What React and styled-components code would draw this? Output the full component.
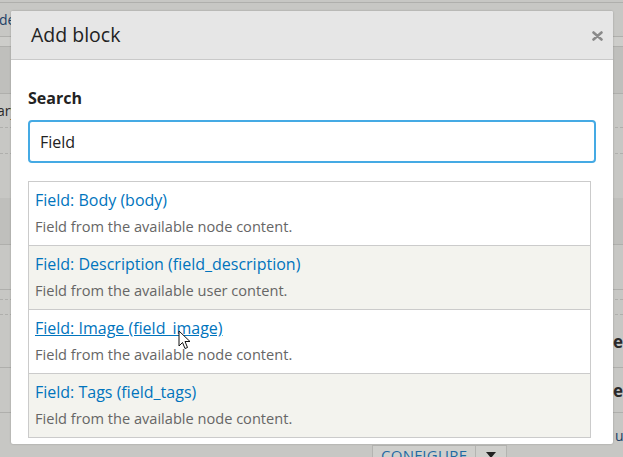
// REACT IMPORTS
import React from 'react';

// STYLING
import styled, { createGlobalStyle } from 'styled-components';

const GlobalStyle = createGlobalStyle`
  html, body {
    margin: 0;
    padding: 0;
    width: 623px;
    height: 457px;
    overflow: hidden;
    font-family: "Open Sans", "Noto Sans", sans-serif;
  }
`;

// BACKDROP (the dimmed page behind the dialog)
const Page = styled.div`
  position: relative;
  width: 623px;
  height: 457px;
  overflow: hidden;
  background: #c7c7c4;
  display: flex;
  flex-direction: column;
`;
const Stripe = styled.div`
  flex: 0 0 ${p => p.$h}px;
  box-sizing: border-box;
  background: ${p => p.$bg || 'transparent'};
  border-bottom: ${p => (p.$line ? `1px ${p.$line} #afafac` : 'none')};
  display: flex;
  align-items: ${p => p.$align || 'center'};
  padding-left: ${p => p.$indent || 0}px;
  white-space: nowrap;
  overflow: hidden;
`;
const BackText = styled.span`
  font-size: ${p => (p.$bold ? 17 : 14)}px;
  font-weight: ${p => (p.$bold ? 700 : 400)};
  color: ${p => p.$color || '#2a2a2a'};
  margin-left: ${p => p.$shift || 0}px;
`;
const SplitButton = styled.div`
  display: flex;
  align-self: flex-start;
  height: 20px;
  border: 1px solid #b4b4b1;
  background: #cfcfcc;
`;
const ButtonLabel = styled.span`
  padding: 0 8px;
  font-size: 15px;
  line-height: 18px;
  color: #1f6aa3;
  letter-spacing: 0.3px;
  border-right: 1px solid #b4b4b1;
`;
const Caret = styled.span`
  width: 30px;
  display: flex;
  justify-content: center;
  padding-top: 6px;
  &::after {
    content: '';
    border-left: 5px solid transparent;
    border-right: 5px solid transparent;
    border-top: 6px solid #222;
    height: 0;
  }
`;

// DIALOG
const Dialog = styled.div`
  position: absolute;
  left: 11px;
  top: 11px;
  width: 602px;
  height: 433px;
  background: #fff;
  border-radius: 2px;
  box-shadow: 0 0 2px rgba(0, 0, 0, 0.25);
  display: flex;
  flex-direction: column;
  overflow: hidden;
`;
const Header = styled.div`
  flex: 0 0 49px;
  box-sizing: border-box;
  background: #e6e6e6;
  border-bottom: 1px solid #c9c9c9;
  display: flex;
  align-items: center;
  justify-content: space-between;
  padding: 0 10px 0 20px;
`;
const Title = styled.h1`
  margin: 0 0 1px;
  font-size: 19.5px;
  font-weight: 400;
  color: #222;
`;
const CloseButton = styled.button`
  border: 0;
  background: none;
  padding: 0;
  display: flex;
  margin-top: 2px;
`;
const Body = styled.div`
  flex: 1;
  padding: 28px 17px 0;
  display: flex;
  flex-direction: column;
`;
const Label = styled.label`
  font-size: 16px;
  line-height: 20px;
  font-weight: 700;
  color: #222;
  margin-bottom: 12px;
`;
const SearchInput = styled.div`
  height: 43px;
  box-sizing: border-box;
  border: 2px solid #45aae4;
  border-radius: 4px;
  display: flex;
  align-items: center;
  padding: 0 10px;
  font-size: 16px;
  color: #222;
  margin-bottom: 18px;
`;
const List = styled.ul`
  list-style: none;
  margin: 0;
  padding: 0;
  width: 563px;
  box-sizing: border-box;
  border: 1px solid #cbcbcb;
`;
const Row = styled.li`
  position: relative;
  box-sizing: border-box;
  padding: 7px 6px 0;
  background: ${p => (p.$alt ? '#f3f3ee' : '#fff')};
  border-top: ${p => (p.$first ? 'none' : '1px solid #cbcbcb')};
  height: ${p => (p.$first ? 63 : 64)}px;
`;
const BlockLink = styled.a`
  display: inline-block;
  font-size: 16px;
  line-height: 22px;
  color: #0074bd;
  text-decoration: ${p => (p.$hover ? 'underline' : 'none')};
`;
const Description = styled.div`
  margin-top: 5px;
  font-size: 14.6px;
  line-height: 20px;
  color: #666;
`;
const Pointer = styled.svg`
  position: absolute;
  left: 149px;
  top: 20px;
`;

const blocks = [
  { label: 'Field: Body (body)', desc: 'Field from the available node content.' },
  { label: 'Field: Description (field_description)', desc: 'Field from the available user content.' },
  { label: 'Field: Image (field_image)', desc: 'Field from the available node content.', hover: true },
  { label: 'Field: Tags (field_tags)', desc: 'Field from the available node content.' }
];

function App() {
  return (
    <Page>
      <GlobalStyle />
      <Stripe $h={3} $line='solid' />
      <Stripe $h={34} $line='solid'><BackText $color='#1c3f66' $shift={-1}>de</BackText></Stripe>
      <Stripe $h={10} $bg='#cdcdca' $line='solid' />
      <Stripe $h={47} $bg='#bfbfbc' $line='solid' />
      <Stripe $h={34} $line='dashed'><BackText $shift={-3}>ary</BackText></Stripe>
      <Stripe $h={26} $line='dashed' />
      <Stripe $h={44} />
      <Stripe $h={47} $bg='#bfbfbc' $line='solid' />
      <Stripe $h={45} $line='solid' />
      <Stripe $h={10} $line='dashed' />
      <Stripe $h={15} $line='dashed' />
      <Stripe $h={53} $indent={613} $line='solid'><BackText $bold>el</BackText></Stripe>
      <Stripe $h={45} $indent={613} $line='solid'><BackText $bold>e</BackText></Stripe>
      <Stripe $h={32} $indent={615} $align='flex-end'><BackText $color='#1c3f66'>u</BackText></Stripe>
      <Stripe $h={12} $indent={372} $align='flex-start'>
        <SplitButton>
          <ButtonLabel>CONFIGURE</ButtonLabel>
          <Caret />
        </SplitButton>
      </Stripe>

      <Dialog>
        <Header>
          <Title>Add block</Title>
          <CloseButton aria-label='Close'>
            <svg width='11' height='10' viewBox='0 0 11 10'>
              <path d='M1.5 1.5 L9.5 8.5 M9.5 1.5 L1.5 8.5' stroke='#8a8a8a' strokeWidth='2.6' strokeLinecap='round' />
            </svg>
          </CloseButton>
        </Header>
        <Body>
          <Label>Search</Label>
          <SearchInput>Field</SearchInput>
          <List>
            {blocks.map((b, i) => (
              <Row key={b.label} $alt={i % 2 === 1} $first={i === 0}>
                <BlockLink href='#' $hover={b.hover}>{b.label}</BlockLink>
                <Description>{b.desc}</Description>
                {b.hover && (
                  <Pointer width='13' height='20' viewBox='0 0 13 20'>
                    <path d='M1 1 L1 16 L4.5 12.5 L7 18.5 L9.5 17.5 L7 11.5 L12 11.5 Z' fill='#fff' stroke='#111' strokeWidth='1' strokeLinejoin='round' />
                  </Pointer>
                )}
              </Row>
            ))}
          </List>
        </Body>
      </Dialog>
    </Page>
  );
}

export default App;
